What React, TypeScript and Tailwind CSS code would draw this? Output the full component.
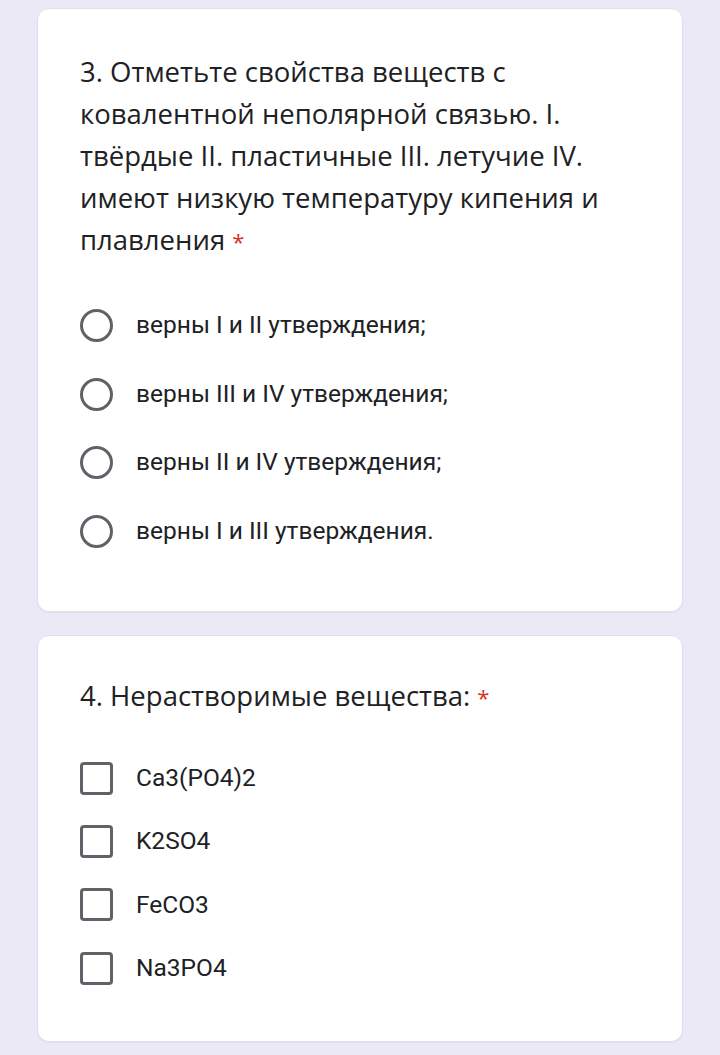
import { useState } from "react"

const radioOptions = [
  "верны I и II утверждения;",
  "верны III и IV утверждения;",
  "верны II и IV утверждения;",
  "верны I и III утверждения.",
]

const checkOptions = ["Ca3(PO4)2", "K2SO4", "FeCO3", "Na3PO4"]

export default function App() {
  const [picked, setPicked] = useState<number | null>(null)
  const [checked, setChecked] = useState<number[]>([])

  const toggle = (i: number) =>
    setChecked((prev) => (prev.includes(i) ? prev.filter((x) => x !== i) : [...prev, i]))

  return (
    <div className="min-h-[1055px] bg-[#ece9f6] px-[37px] pt-[8px] pb-[13px] flex flex-col gap-[23px]">
      {/* Question 3 */}
      <div className="bg-white rounded-[12px] border border-[#e2dfed] shadow-[0_1px_1px_rgba(0,0,0,0.04)] pl-[42px] pr-[42px] pt-[42px] pb-[45px]">
        <h2 className="font-['Open_Sans',sans-serif] text-[27.5px] leading-[42px] text-[#202124]">
          3. Отметьте свойства веществ с ковалентной неполярной связью. I. твёрдые II. пластичные III. летучие IV. имеют низкую температуру кипения и плавления
          <span className="text-[#d93025] ml-[7px] text-[22px] leading-none">*</span>
        </h2>
        <div className="mt-[30px] flex flex-col">
          {radioOptions.map((text, i) => (
            <button
              key={text}
              onClick={() => setPicked(i)}
              className="flex items-center gap-[23px] h-[68.7px] text-left"
            >
              <span className="w-[33px] h-[33px] rounded-full border-[3px] border-[#5f6368] flex items-center justify-center shrink-0">
                {picked === i && <span className="w-[16px] h-[16px] rounded-full bg-[#673ab7]" />}
              </span>
              <span className="font-['Roboto',sans-serif] text-[24.5px] text-[#202124]">{text}</span>
            </button>
          ))}
        </div>
      </div>

      {/* Question 4 */}
      <div className="bg-white rounded-[12px] border border-[#e2dfed] shadow-[0_1px_1px_rgba(0,0,0,0.04)] pl-[42px] pr-[42px] pt-[39px] pb-[41px]">
        <h2 className="font-['Open_Sans',sans-serif] text-[27.5px] leading-[42px] text-[#202124]">
          4. Нерастворимые вещества:
          <span className="text-[#d93025] ml-[7px] text-[22px] leading-none">*</span>
        </h2>
        <div className="mt-[30px] flex flex-col">
          {checkOptions.map((text, i) => (
            <button
              key={text}
              onClick={() => toggle(i)}
              className="flex items-center gap-[23px] h-[63.3px] text-left"
            >
              <span className="w-[33px] h-[33px] rounded-[4px] border-[3px] border-[#5f6368] flex items-center justify-center shrink-0">
                {checked.includes(i) && <span className="w-[14px] h-[14px] bg-[#673ab7]" />}
              </span>
              <span className="font-['Roboto',sans-serif] text-[24.5px] text-[#202124]">{text}</span>
            </button>
          ))}
        </div>
      </div>
    </div>
  )
}
